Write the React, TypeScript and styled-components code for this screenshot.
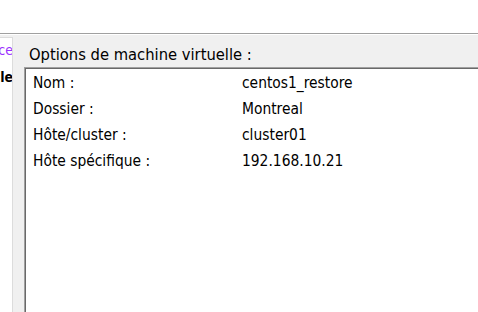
import React from 'react';
import styled, { createGlobalStyle } from 'styled-components';

const GlobalStyle = createGlobalStyle`
  html, body {
    margin: 0;
    padding: 0;
    background: #ffffff;
  }
  body {
    font-family: 'DejaVu Sans Condensed', 'DejaVu Sans', sans-serif;
    font-stretch: condensed;
    color: #000;
  }
`;

const Page = styled.div`
  width: 478px;
  height: 312px;
  display: flex;
  flex-direction: column;
  overflow: hidden;
`;

const TopBand = styled.div`
  height: 33px;
  background: #ffffff;
  flex: none;
`;

const Main = styled.div`
  flex: 1;
  display: flex;
  background: #f0f0f0;
  border-top: 1px solid #a0a0a0;
  box-shadow: inset 0 1px 0 #ffffff;
  min-height: 0;
`;

const Sidebar = styled.div`
  width: 12px;
  margin-top: 3px;
  background: #ffffff;
  border-top: 1px solid #dcdcdc;
  border-right: 1px solid #dcdcdc;
  overflow: hidden;
  display: flex;
  flex-direction: column;
  align-items: flex-end;
  flex: none;
`;

const SideList = styled.div`
  padding-top: 1px;
  display: flex;
  flex-direction: column;
  align-items: flex-end;
  gap: 5px;
`;

const SideItem = styled.div<{ $bold?: boolean; $link?: boolean }>`
  white-space: nowrap;
  font-size: 14px;
  line-height: 22px;
  font-weight: ${(p) => (p.$bold ? 700 : 400)};
  color: ${(p) => (p.$link ? '#9b30ff' : '#000')};
  margin-right: -1px;
`;

const Content = styled.div`
  flex: 1;
  display: flex;
  flex-direction: column;
  padding-left: 11px;
  min-width: 0;
`;

const Title = styled.div`
  height: 33px;
  box-sizing: border-box;
  padding: 11px 0 0 5px;
  font-size: 16.4px;
  line-height: 20px;
  white-space: nowrap;
  flex: none;
`;

const DetailsBox = styled.div`
  flex: 1;
  background: #ffffff;
  border-top: 1px solid #a0a0a0;
  border-left: 1px solid #a0a0a0;
  box-shadow: inset 1px 1px 0 #696969;
  padding: 3px 0 0 8px;
`;

const Row = styled.div`
  display: grid;
  grid-template-columns: 209px 1fr;
  font-size: 15.4px;
  line-height: 25.9px;
  white-space: nowrap;
`;

const rows: [string, string][] = [
  ['Nom :', 'centos1_restore'],
  ['Dossier :', 'Montreal'],
  ['Hôte/cluster :', 'cluster01'],
  ['Hôte spécifique :', '192.168.10.21'],
];

export default function App() {
  return (
    <>
      <GlobalStyle />
      <Page>
        <TopBand />
        <Main>
          <Sidebar>
            <SideList>
              <SideItem $link>Provenance</SideItem>
              <SideItem $bold>Machine virtuelle</SideItem>
            </SideList>
          </Sidebar>
          <Content>
            <Title>Options de machine virtuelle :</Title>
            <DetailsBox>
              {rows.map(([label, value]) => (
                <Row key={label}>
                  <span>{label}</span>
                  <span>{value}</span>
                </Row>
              ))}
            </DetailsBox>
          </Content>
        </Main>
      </Page>
    </>
  );
}
